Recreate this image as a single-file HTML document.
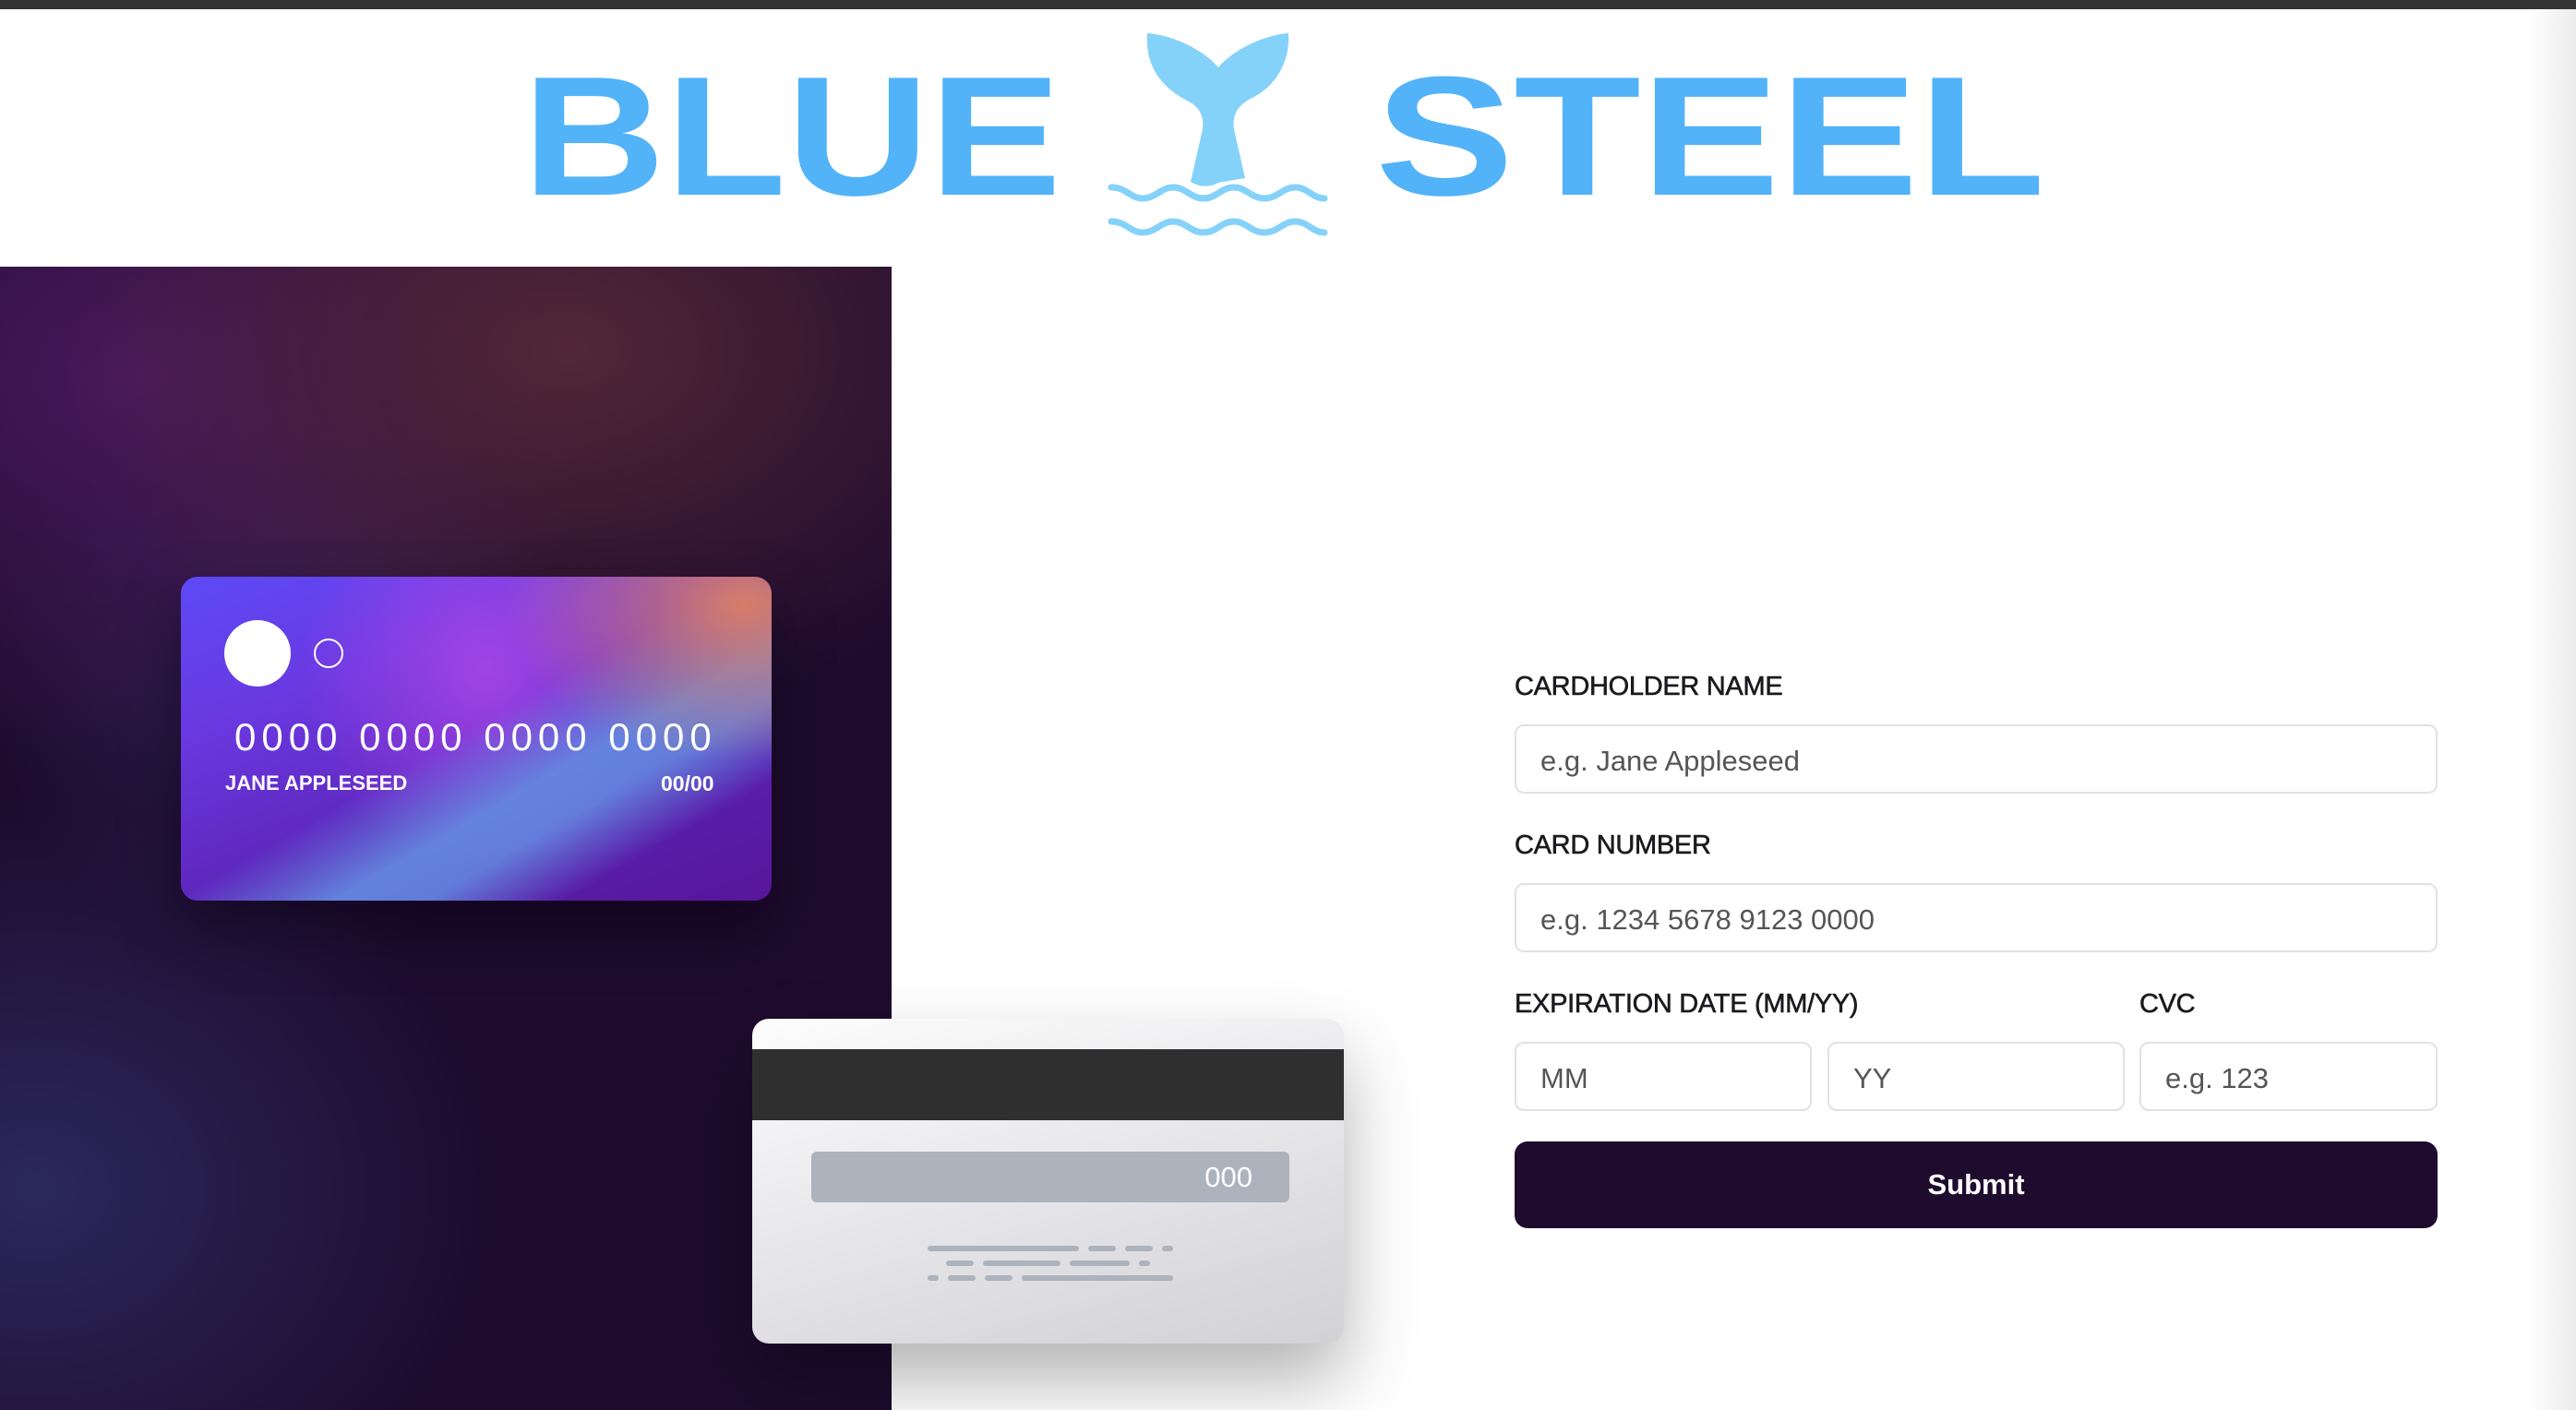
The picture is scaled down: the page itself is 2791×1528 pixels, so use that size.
<!DOCTYPE html>
<html><head><meta charset="utf-8"><style>
*{margin:0;padding:0;box-sizing:border-box}
body{width:2791px;height:1528px;position:relative;overflow:hidden;background:#fff;font-family:"Liberation Sans",sans-serif}
.topbar{position:absolute;left:0;top:0;width:2791px;height:10px;background:#333}
.rightshade{position:absolute;left:2738px;top:10px;width:53px;height:1518px;background:linear-gradient(90deg,#fff,#ececec)}
.panel{position:absolute;left:0;top:289px;width:966px;height:1239px;background:
radial-gradient(ellipse 500px 420px at 40px 1000px,rgba(45,45,100,.85),rgba(45,45,100,0)),
radial-gradient(ellipse 560px 400px at 620px 90px,rgba(85,40,55,.95),rgba(85,40,55,0)),
radial-gradient(ellipse 520px 420px at 150px 120px,rgba(75,25,95,.95),rgba(75,25,95,0)),
radial-gradient(ellipse 320px 320px at 300px 440px,rgba(50,40,90,.7),rgba(50,40,90,0)),
#1e0b2e}
.card{position:absolute;left:196px;top:625px;width:640px;height:351px;border-radius:18px;overflow:hidden;box-shadow:0 30px 60px rgba(10,0,20,.55);background:
radial-gradient(ellipse 260px 170px at 610px 30px,rgba(215,125,105,1),rgba(215,125,105,0)),
linear-gradient(150deg,rgba(0,0,0,0) 48%,rgba(100,140,225,.9) 62%,rgba(100,140,225,.85) 70%,rgba(0,0,0,0) 82%),
radial-gradient(ellipse 200px 220px at 330px 100px,rgba(170,70,230,.85),rgba(170,70,230,0)),
linear-gradient(160deg,#5d4af6 0%,#6a38e0 30%,#5a20b0 70%,#58169a 100%)}
.c1{position:absolute;left:243px;top:672px;width:72px;height:72px;border-radius:50%;background:#fff}
.c2{position:absolute;left:340px;top:692px;width:32px;height:32px;border-radius:50%;border:2px solid #fff}
.num{position:absolute;left:254px;top:775px;font-size:42px;color:#fff;letter-spacing:6px;white-space:nowrap}
.nm{position:absolute;left:244px;top:836px;font-size:22px;font-weight:bold;color:#fff}
.ex{position:absolute;left:716px;top:836px;font-size:23px;font-weight:bold;color:#fff}
.back{position:absolute;left:815px;top:1104px;width:641px;height:352px;border-radius:18px;overflow:hidden;background:linear-gradient(165deg,#fdfdfd 0%,#e9e9ec 45%,#d1d1d6 100%);box-shadow:0 40px 80px rgba(0,0,0,.3)}
.stripe{position:absolute;left:0;top:33px;width:100%;height:77px;background:#2f2f2f}
.cvcbox{position:absolute;left:64px;top:144px;width:518px;height:55px;border-radius:6px;background:#adb3bc}
.cvcbox span{position:absolute;right:40px;top:10px;font-size:31px;color:#fff}
.ln{position:absolute;height:6px;border-radius:3px;background:#adb3bc}
.lbl{position:absolute;font-size:29px;color:#1b1b1f;letter-spacing:-.3px;-webkit-text-stroke:.6px #1b1b1f}
.inp{position:absolute;height:75px;border:2px solid #dfe2e6;border-radius:10px;background:#fff;font-size:31px;color:#555;padding:20px 0 0 26px}
.btn{position:absolute;left:1641px;top:1237px;width:1000px;height:94px;border-radius:14px;background:#1f0b2e;color:#fff;font-size:31px;font-weight:bold;text-align:center;line-height:94px}
</style></head><body>
<div class="topbar"></div>
<div class="rightshade"></div>
<svg style="position:absolute;left:0;top:0" width="2791" height="289">
<text x="566" y="211" font-family="Liberation Sans" font-weight="bold" font-size="184" fill="#52b3f9" textLength="584" lengthAdjust="spacingAndGlyphs">BLUE</text>
<text x="1490" y="211" font-family="Liberation Sans" font-weight="bold" font-size="184" fill="#52b3f9" textLength="726" lengthAdjust="spacingAndGlyphs">STEEL</text>
<path fill="#84d2fa" d="M1243,36 C1240,80 1268,100 1288,110 C1303,118 1304,130 1303,140 L1290,197 Q1305,206 1320,198 L1349,193 L1337,140 C1335,125 1340,115 1355,107 C1380,95 1398,70 1396,36 C1368,38 1335,55 1320,73 C1305,55 1272,38 1243,36 Z"/>
<path fill="none" stroke="#84d2fa" stroke-width="7" stroke-linecap="round" d="M1204,203 C1220,203 1225,215 1238,215 C1252,215 1258,203 1271,203 C1285,203 1290,215 1304,215 C1318,215 1323,203 1337,203 C1350,203 1356,215 1370,215 C1384,215 1390,203 1403,203 C1417,203 1422,215 1435,215"/>
<path fill="none" stroke="#84d2fa" stroke-width="7" stroke-linecap="round" d="M1204,240 C1220,240 1225,252 1238,252 C1252,252 1258,240 1271,240 C1285,240 1290,252 1304,252 C1318,252 1323,240 1337,240 C1350,240 1356,252 1370,252 C1384,252 1390,240 1403,240 C1417,240 1422,252 1435,252"/>
</svg>
<div class="panel"></div>
<div class="card"></div>
<div class="c1"></div><div class="c2"></div>
<div class="num">0000 0000 0000 0000</div>
<div class="nm">JANE APPLESEED</div>
<div class="ex">00/00</div>
<div class="back">
<div class="stripe"></div>
<div class="cvcbox"><span>000</span></div>
<div class="ln" style="left:190px;top:246px;width:164px"></div>
<div class="ln" style="left:364px;top:246px;width:30px"></div>
<div class="ln" style="left:404px;top:246px;width:30px"></div>
<div class="ln" style="left:444px;top:246px;width:12px"></div>
<div class="ln" style="left:210px;top:262px;width:30px"></div>
<div class="ln" style="left:250px;top:262px;width:84px"></div>
<div class="ln" style="left:344px;top:262px;width:65px"></div>
<div class="ln" style="left:419px;top:262px;width:12px"></div>
<div class="ln" style="left:190px;top:278px;width:12px"></div>
<div class="ln" style="left:212px;top:278px;width:30px"></div>
<div class="ln" style="left:252px;top:278px;width:30px"></div>
<div class="ln" style="left:292px;top:278px;width:164px"></div>
</div>
<div class="lbl" style="left:1641px;top:728px">CARDHOLDER NAME</div>
<div class="inp" style="left:1641px;top:785px;width:1000px">e.g. Jane Appleseed</div>
<div class="lbl" style="left:1641px;top:900px">CARD NUMBER</div>
<div class="inp" style="left:1641px;top:957px;width:1000px">e.g. 1234 5678 9123 0000</div>
<div class="lbl" style="left:1641px;top:1072px">EXPIRATION DATE (MM/YY)</div>
<div class="lbl" style="left:2318px;top:1072px">CVC</div>
<div class="inp" style="left:1641px;top:1129px;width:322px">MM</div>
<div class="inp" style="left:1980px;top:1129px;width:322px">YY</div>
<div class="inp" style="left:2318px;top:1129px;width:323px">e.g. 123</div>
<div class="btn">Submit</div>
</body></html>
